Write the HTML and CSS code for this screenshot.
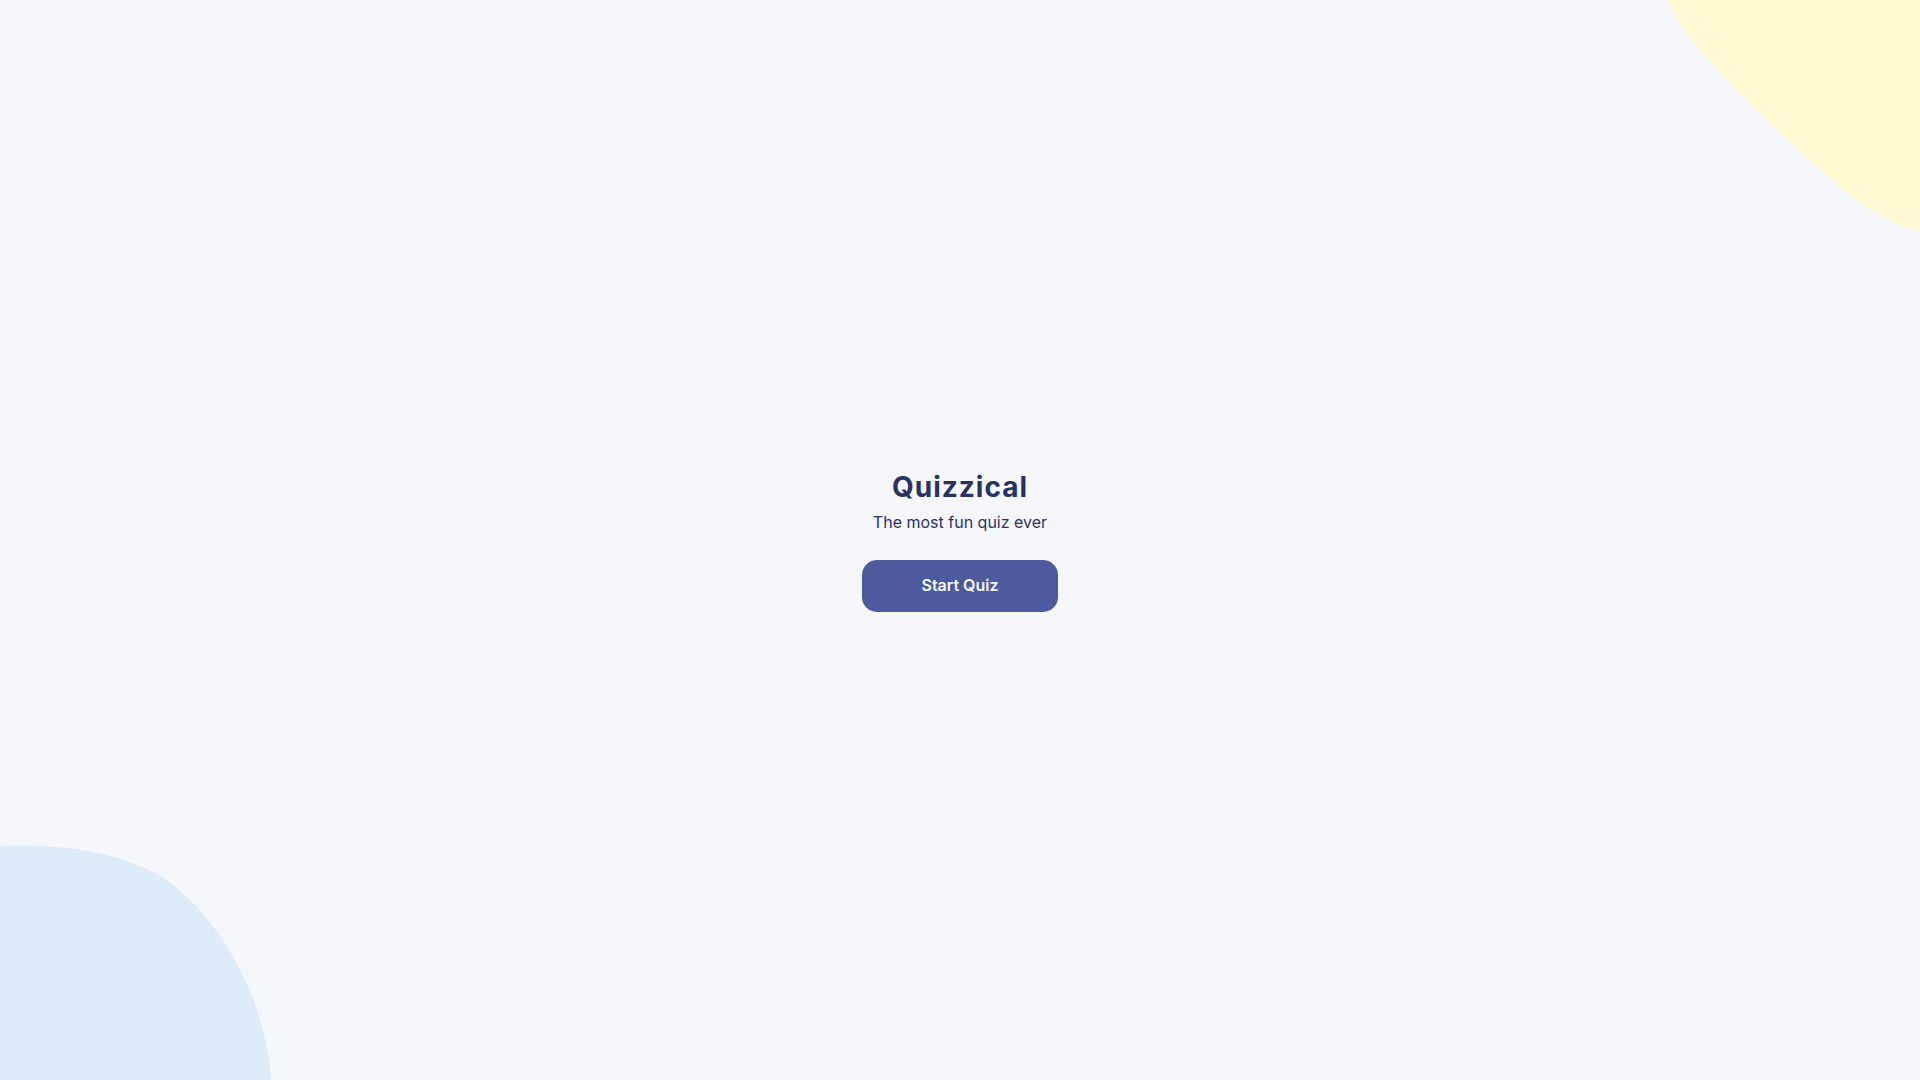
FILE: index.html
```html
<!DOCTYPE html>
<html lang="en">
<head>
<meta charset="utf-8">
<title>Quizzical</title>
<link rel="stylesheet" href="styles.css">
</head>
<body>
<svg class="blob blob-yellow" width="252" height="230" viewBox="0 0 252 230" aria-hidden="true">
  <path d="M0 0 C10 30 40 60 82 103 C120 140 150 170 189 200 C215 218 235 228 252 230 L252 0 Z" fill="#FFFAD1"/>
</svg>
<svg class="blob blob-blue" width="272" height="235" viewBox="0 0 272 235" aria-hidden="true">
  <path d="M0 1 C60 -1 120 5 167 35 C220 75 265 150 271 235 L0 235 Z" fill="#DEEBF8"/>
</svg>
<main class="start">
  <h1 class="title">Quizzical</h1>
  <p class="subtitle">The most fun quiz ever</p>
  <button class="start-btn">Start Quiz</button>
</main>
</body>
</html>
```
FILE: styles.css
```css
html, body {
  margin: 0;
  padding: 0;
  height: 100%;
}
body {
  background: #F5F7FB;
  font-family: Inter, "Noto Sans", sans-serif;
  color: #293264;
  overflow: hidden;
  position: relative;
}
.blob {
  position: absolute;
  display: block;
}
.blob-yellow {
  top: 0;
  right: 0;
}
.blob-blue {
  bottom: 0;
  left: 0;
}
.start {
  position: relative;
  height: 100%;
  display: flex;
  flex-direction: column;
  align-items: center;
  justify-content: center;
}
.title {
  margin: 2px 0 0;
  font-size: 28px;
  font-weight: 700;
  letter-spacing: 1px;
  line-height: 34px;
}
.subtitle {
  margin: 8px 0 0;
  font-size: 16px;
  font-weight: 400;
  line-height: 20px;
}
.start-btn {
  margin-top: 28px;
  width: 196px;
  height: 52px;
  padding: 0 0 2px;
  border: none;
  border-radius: 15px;
  background: #4D5B9E;
  color: #F5F7FB;
  font-family: Inter, "Noto Sans", sans-serif;
  font-size: 16px;
  font-weight: 600;
  cursor: pointer;
}
```
